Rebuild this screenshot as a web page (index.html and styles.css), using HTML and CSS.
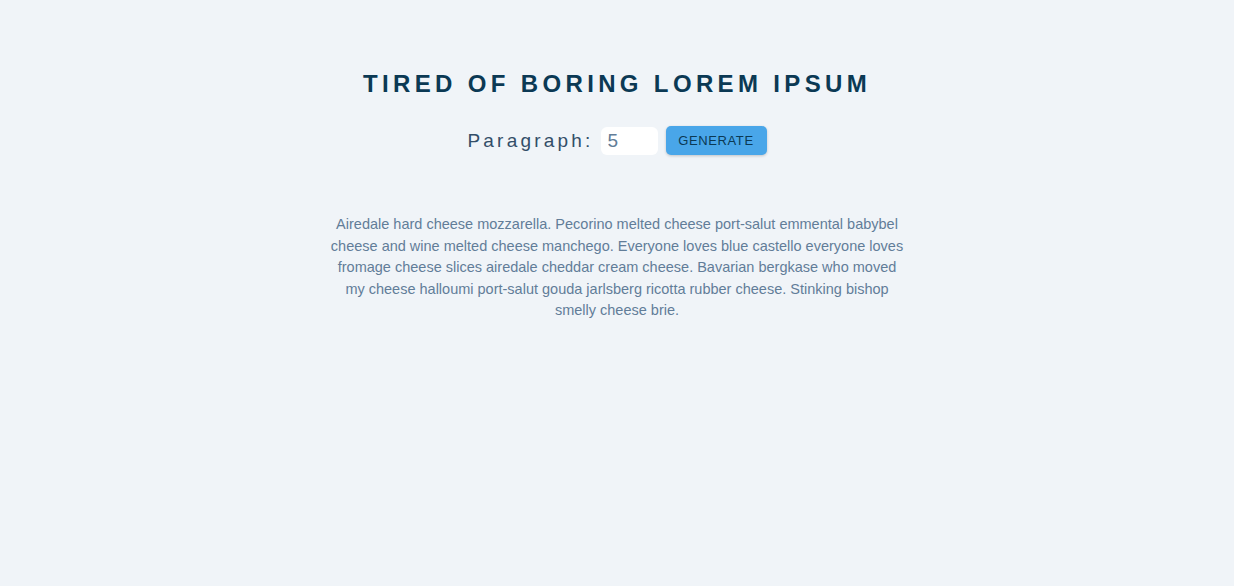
FILE: index.html
```html
<!DOCTYPE html>
<html>
<head>
<meta charset="utf-8">
<link rel="stylesheet" href="styles.css">
</head>
<body>
<section class="center">
  <h3 class="title">Tired of boring lorem ipsum</h3>
  <form class="lorem-form">
    <label for="amount" class="label">Paragraph:</label>
    <input type="number" id="amount" class="amount" value="5">
    <button type="button" class="btn">Generate</button>
  </form>
  <article class="lorem-text">
    <p>Airedale hard cheese mozzarella. Pecorino melted cheese port-salut emmental babybel cheese and wine melted cheese manchego. Everyone loves blue castello everyone loves fromage cheese slices airedale cheddar cream cheese. Bavarian bergkase who moved my cheese halloumi port-salut gouda jarlsberg ricotta rubber cheese. Stinking bishop smelly cheese brie.</p>
  </article>
</section>
</body>
</html>
```
FILE: styles.css
```css
* { box-sizing: border-box; margin: 0; padding: 0; }
html, body { height: 100%; }
body {
  background: #f0f4f8;
  font-family: "Liberation Sans", Arial, sans-serif;
  color: #102a43;
}
.center {
  width: 576px;
  margin: 0 auto;
  padding-top: 69px;
  text-align: center;
}
.title {
  font-size: 24px;
  font-weight: 700;
  text-transform: uppercase;
  letter-spacing: 4.35px;
  color: #0b3954;
  line-height: 30px;
  white-space: nowrap;
}
.lorem-form {
  display: flex;
  justify-content: center;
  align-items: center;
  margin-top: 27px;
}
.label {
  font-size: 19px;
  letter-spacing: 3.2px;
  color: #334e68;
  margin-right: 7px;
}
.amount {
  width: 57px;
  height: 28px;
  border: none;
  border-radius: 6px;
  background: #fff;
  padding: 0 7px;
  font-size: 19px;
  font-family: "Liberation Sans", Arial, sans-serif;
  color: #627d98;
  margin-right: 8px;
  outline: none;
}
.btn {
  width: 101px;
  height: 29px;
  border: none;
  border-radius: 5px;
  background: #49a6e9;
  color: #0b3954;
  font-size: 13px;
  letter-spacing: 0.6px;
  text-transform: uppercase;
  font-family: "Liberation Sans", Arial, sans-serif;
  box-shadow: 0 1px 3px rgba(0,0,0,0.2);
}
.lorem-text {
  margin-top: 59px;
}
.lorem-text p {
  font-size: 14.5px;
  line-height: 21.6px;
  color: #627d98;
}
```
